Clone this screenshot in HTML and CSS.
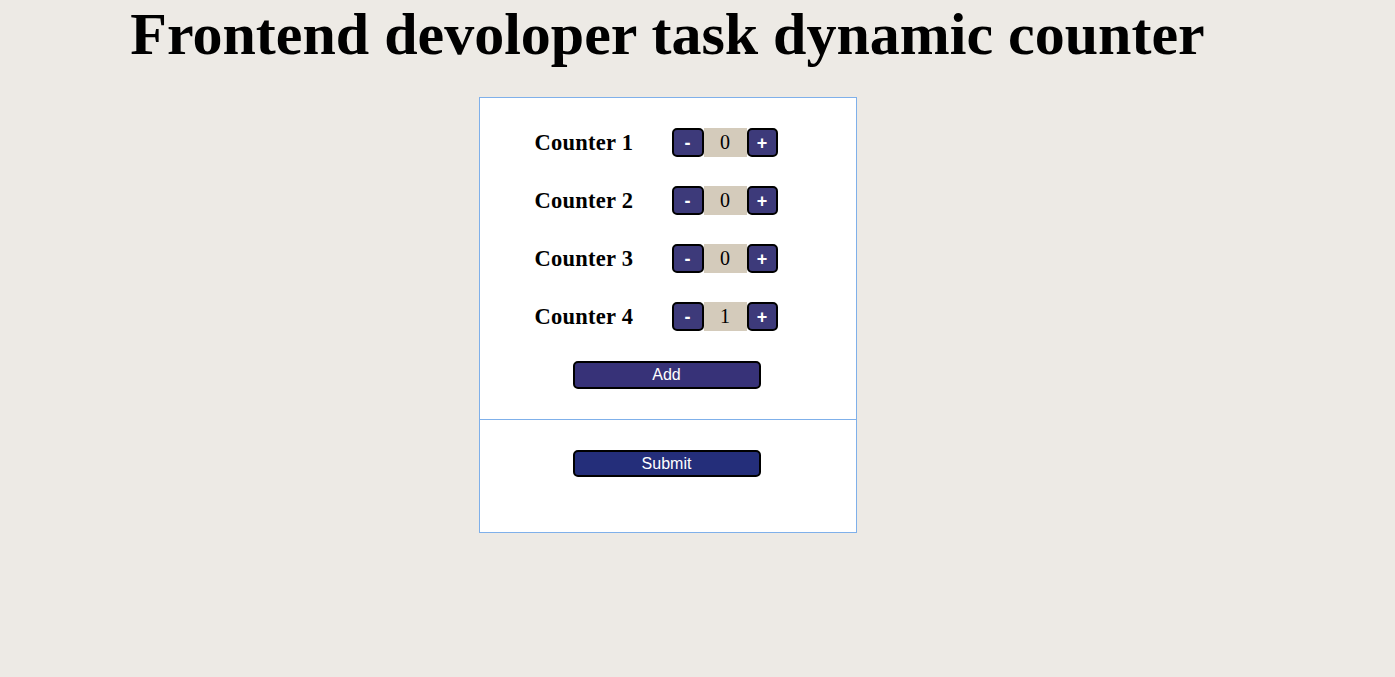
FILE: index.html
```html
<!DOCTYPE html>
<html>
<head>
<meta charset="utf-8">
<link rel="stylesheet" href="styles.css">
</head>
<body>
<div class="page">
  <h1 class="title">Frontend devoloper task dynamic counter</h1>
  <div class="card">
    <div class="counters">
      <div class="row"><span class="label">Counter 1</span><div class="group"><button class="btn">-</button><span class="value">0</span><button class="btn">+</button></div></div>
      <div class="row"><span class="label">Counter 2</span><div class="group"><button class="btn">-</button><span class="value">0</span><button class="btn">+</button></div></div>
      <div class="row"><span class="label">Counter 3</span><div class="group"><button class="btn">-</button><span class="value">0</span><button class="btn">+</button></div></div>
      <div class="row"><span class="label">Counter 4</span><div class="group"><button class="btn">-</button><span class="value">1</span><button class="btn">+</button></div></div>
      <button class="wide add">Add</button>
    </div>
    <div class="footer">
      <button class="wide submit">Submit</button>
    </div>
  </div>
</div>
</body>
</html>
```
FILE: styles.css
```css
html, body {
  margin: 0;
  padding: 0;
}
body {
  background: #edeae5;
  font-family: "Liberation Serif", "Times New Roman", serif;
  padding: 0 8px;
}
.page {
  width: 1319px;
  display: flex;
  flex-direction: column;
  align-items: center;
}
.title {
  margin: 0;
  font-size: 60px;
  line-height: 68px;
  font-weight: bold;
  color: #000;
  white-space: nowrap;
}
.card {
  margin-top: 29px;
  width: 376px;
  background: #fff;
  border: 1px solid #7fb0ea;
}
.counters {
  padding: 30px 2px 30px 0;
  display: flex;
  flex-direction: column;
  gap: 29px;
  border-bottom: 1px solid #7fb0ea;
}
.row {
  display: flex;
  align-items: center;
  height: 29px;
  padding-left: 55px;
}
.label {
  width: 137px;
  font-size: 22.5px;
  letter-spacing: 0.25px;
  font-weight: bold;
}
.group {
  display: flex;
  height: 29px;
}
.btn {
  width: 32px;
  height: 29px;
  padding: 0;
  margin: 0;
  border: 2px solid #000;
  border-radius: 5px;
  background: #3d3a7a;
  color: #fff;
  font-family: "Liberation Sans", Arial, sans-serif;
  font-weight: bold;
  font-size: 18px;
  line-height: 24px;
}
.btn + .value + .btn {
  width: 31px;
}
.value {
  width: 43px;
  background: #d4cbbb;
  text-align: center;
  font-size: 20px;
  line-height: 29px;
}
.wide {
  align-self: center;
  display: block;
  width: 188px;
  height: 28px;
  padding: 0;
  border: 2px solid #000;
  border-radius: 5px;
  color: #fff;
  font-family: "Liberation Sans", Arial, sans-serif;
  font-size: 16px;
}
.add {
  background: #373278;
  margin-top: 1px;
}
.footer {
  padding: 30px 2px 55px 0;
  display: flex;
  justify-content: center;
}
.submit {
  background: #242e7a;
  height: 27px;
}
```
